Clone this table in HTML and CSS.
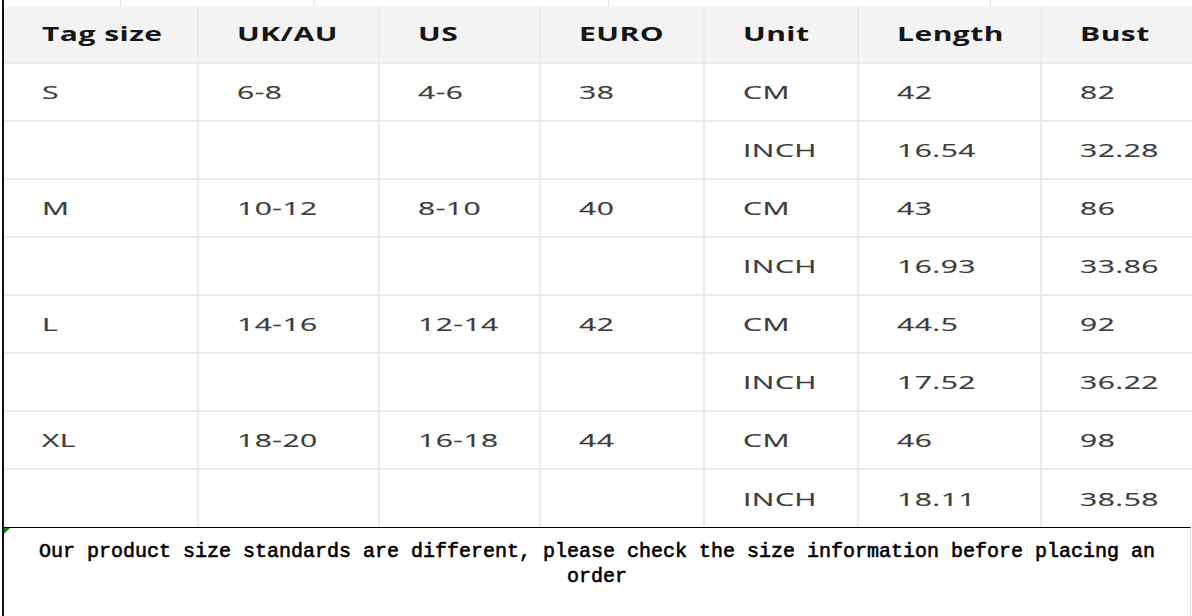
FILE: index.html
```html
<!DOCTYPE html>
<html>
<head>
<meta charset="utf-8">
<link rel="stylesheet" href="styles.css">
</head>
<body>
<div class="sheet">
  <div class="strip">
    <span class="gl gl1"></span><span class="gl gl2"></span><span class="gl gl3"></span><span class="gl gl4"></span>
  </div>
  <div class="chart">
    <div class="row head">
      <div class="cell"><span class="t">Tag size</span></div><div class="cell"><span class="t">UK/AU</span></div><div class="cell"><span class="t">US</span></div><div class="cell"><span class="t">EURO</span></div><div class="cell"><span class="t">Unit</span></div><div class="cell"><span class="t">Length</span></div><div class="cell"><span class="t">Bust</span></div>
    </div>
    <div class="row"><div class="cell"><span class="t">S</span></div><div class="cell"><span class="t">6-8</span></div><div class="cell"><span class="t">4-6</span></div><div class="cell"><span class="t">38</span></div><div class="cell"><span class="t">CM</span></div><div class="cell"><span class="t">42</span></div><div class="cell"><span class="t">82</span></div></div>
    <div class="row"><div class="cell"></div><div class="cell"></div><div class="cell"></div><div class="cell"></div><div class="cell"><span class="t">INCH</span></div><div class="cell"><span class="t">16.54</span></div><div class="cell"><span class="t">32.28</span></div></div>
    <div class="row"><div class="cell"><span class="t">M</span></div><div class="cell"><span class="t">10-12</span></div><div class="cell"><span class="t">8-10</span></div><div class="cell"><span class="t">40</span></div><div class="cell"><span class="t">CM</span></div><div class="cell"><span class="t">43</span></div><div class="cell"><span class="t">86</span></div></div>
    <div class="row"><div class="cell"></div><div class="cell"></div><div class="cell"></div><div class="cell"></div><div class="cell"><span class="t">INCH</span></div><div class="cell"><span class="t">16.93</span></div><div class="cell"><span class="t">33.86</span></div></div>
    <div class="row"><div class="cell"><span class="t">L</span></div><div class="cell"><span class="t">14-16</span></div><div class="cell"><span class="t">12-14</span></div><div class="cell"><span class="t">42</span></div><div class="cell"><span class="t">CM</span></div><div class="cell"><span class="t">44.5</span></div><div class="cell"><span class="t">92</span></div></div>
    <div class="row"><div class="cell"></div><div class="cell"></div><div class="cell"></div><div class="cell"></div><div class="cell"><span class="t">INCH</span></div><div class="cell"><span class="t">17.52</span></div><div class="cell"><span class="t">36.22</span></div></div>
    <div class="row"><div class="cell"><span class="t">XL</span></div><div class="cell"><span class="t">18-20</span></div><div class="cell"><span class="t">16-18</span></div><div class="cell"><span class="t">44</span></div><div class="cell"><span class="t">CM</span></div><div class="cell"><span class="t">46</span></div><div class="cell"><span class="t">98</span></div></div>
    <div class="row last"><div class="cell"></div><div class="cell"></div><div class="cell"></div><div class="cell"></div><div class="cell"><span class="t">INCH</span></div><div class="cell"><span class="t">18.11</span></div><div class="cell"><span class="t">38.58</span></div></div>
  </div>
  <div class="note">
    <span class="flag"></span>
    <p class="note-text">Our product size standards are different, please check the size information before placing an order</p>
  </div>
</div>
</body>
</html>
```

FILE: styles.css
```css
html, body {
  margin: 0;
  padding: 0;
  background: #fff;
}

.sheet {
  margin-left: 2px;
  border-left: 2px solid #111;
  height: 616px;
  box-sizing: border-box;
  display: flex;
  flex-direction: column;
  overflow: hidden;
}

.strip {
  height: 6px;
  position: relative;
  flex: none;
}

.gl {
  position: absolute;
  top: 0;
  width: 1px;
  height: 6px;
  background: #e4e4e4;
}
.gl1 { left: 116px; }
.gl2 { left: 310px; }
.gl3 { left: 604px; }
.gl4 { left: 986px; }

.chart {
  flex: none;
  width: 1192px;
  border-radius: 9px 9px 0 0;
  overflow: hidden;
  font-family: "Open Sans", "DejaVu Sans", sans-serif;
}

.row {
  display: grid;
  grid-template-columns: 195px 181px 161px 164px 154px 183px 154px;
  height: 58px;
}

.row.last {
  height: 57px;
}

.cell {
  box-sizing: border-box;
  height: 100%;
  padding-left: 38px;
  display: flex;
  align-items: center;
  border-right: 2px solid #ebebeb;
  border-bottom: 2px solid #ebebeb;
  font-size: 19px;
  letter-spacing: 0.3px;
  color: #3c3c3c;
  white-space: nowrap;
}

.t {
  display: inline-block;
  transform: scaleX(1.58);
  transform-origin: left center;
  -webkit-text-stroke: 0.2px #3c3c3c;
}

.row.last .cell {
  border-bottom: none;
}

.head .cell {
  background: #f3f3f3;
  font-weight: bold;
  color: #151515;
}

.head .t {
  -webkit-text-stroke: 0;
}

.note {
  flex: 1;
  position: relative;
  width: 1187px;
  box-sizing: border-box;
  border-top: 1px solid #000;
  border-right: 1px solid #dcdcdc;
  padding-top: 11px;
}

.flag {
  position: absolute;
  left: 0;
  top: 0;
  width: 0;
  height: 0;
  border-top: 6px solid #1f7a1f;
  border-right: 6px solid transparent;
}

.note-text {
  margin: 0;
  text-align: center;
  font-family: "Liberation Mono", "Courier New", monospace;
  font-size: 20px;
  line-height: 25px;
  color: #000;
  -webkit-text-stroke: 0.6px #000;
}
```
